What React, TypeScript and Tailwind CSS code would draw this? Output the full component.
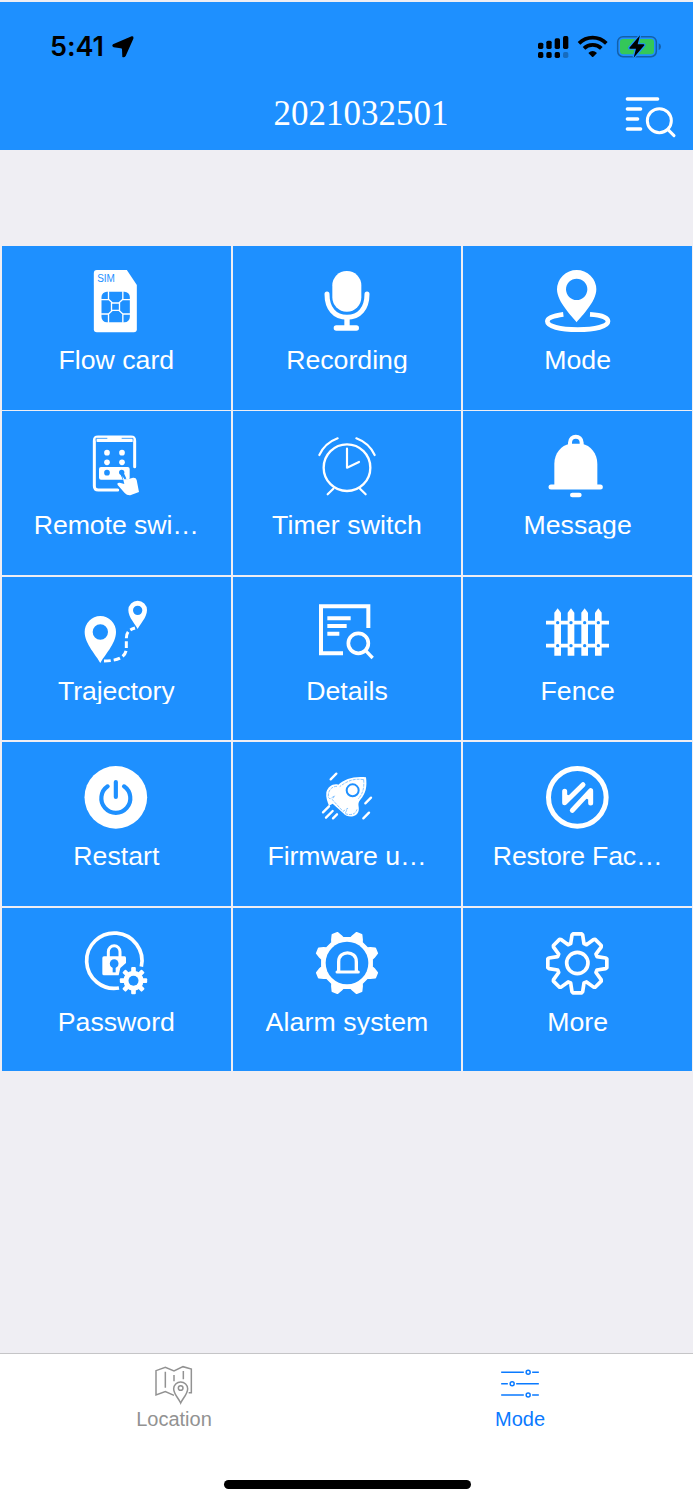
import type { ReactNode } from "react";

const BLUE = "#1e90ff";

// Outline of an eight-toothed gear, one tooth every 45 degrees
const gearPath = (cx: number, cy: number, tooth: number[][]) => {
  const points: string[] = [];
  for (let i = 0; i < 8; i++) {
    const a = (i * Math.PI) / 4;
    tooth.forEach(([x, y]) => {
      const px = cx + x * Math.cos(a) - y * Math.sin(a);
      const py = cy + x * Math.sin(a) + y * Math.cos(a);
      points.push(`${px.toFixed(1)} ${py.toFixed(1)}`);
    });
  }
  return `M${points.join("L")}Z`;
};

const stroke = {
  fill: "none",
  stroke: "white",
  strokeLinecap: "round",
  strokeLinejoin: "round",
} as const;

interface IconProps {
  viewBox: string;
  children: ReactNode;
}

const Icon: React.FC<IconProps> = ({ viewBox, children }) => (
  <svg viewBox={viewBox} className="h-20 w-20 shrink-0" fill="white">
    {children}
  </svg>
);

const SimIcon = () => (
  <Icon viewBox="228.5 63 240 240">
    <path d="M291 90H381L411 135V268Q411 277 402 277H291Q282 277 282 268V99Q282 90 291 90Z" />
    <text x="292" y="127" fontSize="30" fill={BLUE} fontFamily="Liberation Sans, sans-serif">
      SIM
    </text>
    <rect x="305" y="155" width="85" height="92" rx="16" fill={BLUE} />
    <path
      {...stroke}
      strokeWidth="4"
      d="M326 155V178L338 189H357L369 178V155M326 247V222L338 211H357L369 222V247M305 179H326M369 179H390M305 222H326M369 222H390M335 189V211M359 189V211"
    />
  </Icon>
);

const MicIcon = () => (
  <Icon viewBox="921 63 240 240">
    <rect x="997" y="93" width="87" height="122" rx="43" />
    <path {...stroke} strokeWidth="15" d="M981 162C981 206 1004 232 1041 232C1078 232 1101 206 1101 162" />
    <path {...stroke} strokeWidth="16" d="M1041 236V262M1009 264H1069" />
  </Icon>
);

const PinIcon = () => (
  <Icon viewBox="585 63 240 240">
    <path
      fillRule="evenodd"
      d="M701 247C688 230 642 186 642 148A59 58 0 0 1 760 148C760 186 714 230 701 247ZM669 148a32 32 0 1 0 64 0a32 32 0 1 0 -64 0Z"
    />
    <path
      fill="none"
      stroke="white"
      strokeWidth="14"
      d="M661 223C630 227 613 235 613 244C613 259 650 269 704 269C758 269 795 259 795 244C795 234 778 225 741 223"
    />
  </Icon>
);

const RemoteIcon = () => (
  <Icon viewBox="229 64 240 240">
    <path
      {...stroke}
      strokeWidth="9"
      d="M354 256H296Q284 256 284 244V108Q284 97 295 97H394Q405 97 405 108V186"
    />
    <path d="M290 97H400V108Q400 112 396 112H294Q290 112 290 108Z" />
    <path stroke={BLUE} strokeWidth="2.5" fill="none" d="M289 108V101H323M366 101H400V108" />
    <circle cx="322" cy="144" r="8.5" />
    <circle cx="367" cy="144" r="8.5" />
    <circle cx="322" cy="173" r="8.5" />
    <circle cx="367" cy="173" r="8.5" />
    <rect x="298" y="187" width="92" height="38" rx="6" />
    <circle cx="322" cy="204" r="8.5" fill={BLUE} />
    <circle cx="366" cy="203" r="8" fill={BLUE} />
    <path d="M366 204L375 224" stroke={BLUE} strokeWidth="11" />
    <path d="M376 226L400 219Q409 218 411 226L418 262L392 272Q382 273 375 265L354 241Q351 233 360 234L374 238L368 214Z" />
  </Icon>
);

const TimerIcon = () => (
  <Icon viewBox="921 64 240 240">
    <circle {...stroke} cx="1041" cy="189" r="70" strokeWidth="7" />
    <path
      {...stroke}
      strokeWidth="6.5"
      d="M1041 132V189L1077 172M1013 101Q975 115 958 151M1069 101Q1107 115 1124 151M1000 252L983 269M1080 252L1097 269"
    />
  </Icon>
);

const BellIcon = () => (
  <Icon viewBox="585 64 240 240">
    <path d="M634 246V178C634 145 655 122 680 117H717C742 122 763 145 763 178V246Z" />
    <path {...stroke} strokeWidth="12" d="M681 120V114C681 90 716 90 716 114V120" />
    <path {...stroke} strokeWidth="15" d="M624 247H772" />
    <path {...stroke} strokeWidth="14" d="M688 271H709" />
  </Icon>
);

const TrajectoryIcon = () => (
  <Icon viewBox="229 66 240 240">
    <path
      fillRule="evenodd"
      d="M302 279C292 258 255 222 255 186A47 48 0 0 1 349 186C349 222 312 258 302 279ZM279 186a23 23 0 1 0 46 0a23 23 0 1 0 -46 0Z"
    />
    <path
      fillRule="evenodd"
      d="M414 177C408 163 386 143 386 120A28 28 0 0 1 442 120C442 143 420 163 414 177ZM400 121a14 14 0 1 0 28 0a14 14 0 1 0 -28 0Z"
    />
    <path
      fill="none"
      stroke="white"
      strokeWidth="9"
      strokeDasharray="20 9"
      d="M313 273C348 273 380 264 380 235V205C380 186 389 179 406 174"
    />
  </Icon>
);

const DetailsIcon = () => (
  <Icon viewBox="921 66 240 240">
    <path
      fill="none"
      stroke="white"
      strokeWidth="12"
      d="M1029 250H963V109H1105V174M982 145H1052M982 168H1040M982 191H1018"
    />
    <circle cx="1075" cy="220" r="30" fill="none" stroke="white" strokeWidth="11" />
    <path {...stroke} strokeLinecap="butt" strokeWidth="10" d="M1097 242L1118 264" />
  </Icon>
);

const FenceIcon = () => (
  <Icon viewBox="585 66 240 240">
    <path fill="none" stroke="white" strokeWidth="11" d="M609 158H798M609 227H798" />
    {[644, 684, 725, 766].map((x) => (
      <g key={x}>
        <path d={`M${x - 10} 257V128L${x} 115L${x + 10} 128V257Z`} />
        <circle cx={x} cy="158" r="5" fill={BLUE} />
        <circle cx={x} cy="227" r="5" fill={BLUE} />
      </g>
    ))}
  </Icon>
);

const PowerIcon = () => (
  <Icon viewBox="229 66 240 240">
    <circle cx="348.5" cy="187" r="94" />
    <path {...stroke} stroke={BLUE} strokeWidth="12.5" d="M324 154A43.5 43.5 0 1 0 373 154M348.5 141V186" />
  </Icon>
);

const RocketIcon = () => (
  <Icon viewBox="921 67 240 240">
    <path d="M1098 128C1060 124 1034 134 1015 150C998 146 984 156 979 173C977 188 982 201 987 213L998 207L1030 236C1042 250 1070 250 1076 228C1079 214 1070 209 1081 195C1097 178 1102 157 1098 128Z" />
    <path
      fill="none"
      stroke={BLUE}
      strokeWidth="1.5"
      strokeDasharray="9 3"
      d="M1091 135C1060 130 1040 140 1019 156M1091 135C1093 160 1089 178 1074 193M1011 155C994 155 983 169 985 188L990 193L1004 183L997 195L1029 230L1043 221L1035 237C1053 243 1067 239 1071 224"
    />
    <circle cx="1058" cy="167" r="18" fill="white" stroke={BLUE} strokeWidth="6" />
    <path
      {...stroke}
      strokeWidth="7"
      d="M1009 117L992 134M1113 189L1096 206M1107 234L1090 251M987 215L969 233M998 229L978 249M1011 239L999 251"
    />
  </Icon>
);

const RestoreIcon = () => (
  <Icon viewBox="294 66 240 240">
    <circle {...stroke} cx="412" cy="187" r="86.5" strokeWidth="15" />
    <path {...stroke} strokeWidth="15" d="M374 169V203L429 149M397 226L452 167V204" />
    <path d="M374 176L394 184L375 203ZM452 169L451 196L432 188Z" />
  </Icon>
);

const PasswordIcon = () => (
  <Icon viewBox="229 68 240 240">
    <path {...stroke} strokeWidth="11" strokeLinecap="butt" d="M425 199A83 83 0 1 0 358 263" />
    <path {...stroke} strokeWidth="9" d="M326 170V154A17.5 17.5 0 0 1 361 154V170" />
    <path d="M313 168H375Q379 168 379 173V188L362 203L357 225H313Q308 225 308 220V173Q308 168 313 168Z" />
    <circle cx="343.5" cy="190" r="13" fill={BLUE} />
    <path d="M343.5 195V216" stroke={BLUE} strokeWidth="9" />
    <g transform="translate(401.5 241)">
      {[0, 45, 90, 135].map((angle) => (
        <rect key={angle} x="-7" y="-41" width="14" height="82" rx="3" transform={`rotate(${angle})`} />
      ))}
      <circle r="30" />
      <circle r="15" fill={BLUE} />
    </g>
  </Icon>
);

const AlarmIcon = () => (
  <Icon viewBox="921 68 240 240">
    <g transform="rotate(22.5 1041 188)">
      <path
        stroke="white"
        strokeWidth="5"
        strokeLinejoin="round"
        d={gearPath(1041, 188, [[-18, -74], [-15, -82], [-8, -95], [8, -95], [15, -82], [18, -74]])}
      />
    </g>
    <circle cx="1041" cy="188" r="64" fill={BLUE} />
    <path {...stroke} strokeWidth="10" d="M1016 213V184C1016 149 1069 149 1069 184V213" />
    <path {...stroke} strokeWidth="9" d="M1011 215H1075" />
  </Icon>
);

const GearIcon = () => (
  <Icon viewBox="294 563 240 240">
    <path
      {...stroke}
      strokeWidth="11"
      d={gearPath(412, 684, [[-20, -59], [-16, -85], [-13, -88.5], [13, -88.5], [16, -85], [20, -59]])}
    />
    <circle {...stroke} cx="412" cy="683" r="32" strokeWidth="11" />
  </Icon>
);

const items = [
  { label: "Flow card", icon: <SimIcon /> },
  { label: "Recording", icon: <MicIcon />, className: "[clip-path:inset(0_0_3px_0)]" },
  { label: "Mode", icon: <PinIcon /> },
  { label: "Remote swi…", icon: <RemoteIcon />, className: "tracking-[-0.1px]" },
  { label: "Timer switch", icon: <TimerIcon />, className: "tracking-[0.1px]" },
  { label: "Message", icon: <BellIcon />, className: "[clip-path:inset(0_0_3px_0)]" },
  {
    label: "Trajectory",
    icon: <TrajectoryIcon />,
    className: "tracking-[-0.1px] [clip-path:inset(0_0_3px_0)]",
  },
  { label: "Details", icon: <DetailsIcon /> },
  { label: "Fence", icon: <FenceIcon /> },
  { label: "Restart", icon: <PowerIcon /> },
  { label: "Firmware u…", icon: <RocketIcon />, className: "tracking-[-0.1px]" },
  { label: "Restore Fac…", icon: <RestoreIcon />, className: "tracking-[-0.2px]" },
  { label: "Password", icon: <PasswordIcon /> },
  { label: "Alarm system", icon: <AlarmIcon />, className: "tracking-[0.1px] [clip-path:inset(0_0_3px_0)]" },
  { label: "More", icon: <GearIcon /> },
];

const StatusBar = () => (
  <div className="flex h-[86px] items-center justify-between pt-1 pr-[31px] pl-[50px] text-black">
    <div className="flex items-center gap-2">
      <span className="font-[Inter,sans-serif] text-[27px] leading-8 font-semibold tracking-[-0.1px]">5:41</span>
      <svg viewBox="336 107 66 66" className="h-[22px] w-[22px]">
        <path d="M395 108Q402 107 400 115L377 167Q373 173 367 170L366 147Q366 144 362 144L341 141Q334 138 339 132Z" />
      </svg>
    </div>
    <svg viewBox="111 102 375 72" className="h-6 w-[125px]">
      <rect x="114" y="125" width="16" height="19" rx="5" />
      <rect x="139" y="119" width="16" height="25" rx="5" />
      <rect x="164" y="112" width="16" height="32" rx="5" />
      <rect x="189" y="105" width="16" height="39" rx="5" />
      <rect x="114" y="153" width="16" height="18" rx="5" />
      <rect x="139" y="153" width="16" height="18" rx="5" />
      <rect x="164" y="153" width="16" height="18" rx="5" />
      <rect x="189" y="153" width="16" height="18" rx="5" opacity="0.25" />
      <path d="M237 127C260 104 296 104 319 127" fill="none" stroke="black" strokeWidth="11" />
      <path d="M252 142C266 128 290 128 304 142" fill="none" stroke="black" strokeWidth="11" />
      <path d="M265 156Q278 144 291 156L280 167Q278 169 276 167Z" />
      <rect x="353" y="107" width="116" height="60" rx="16" fill="none" stroke="#145fa9" strokeWidth="4.5" />
      <path d="M476 127Q483 130 483 137Q483 144 476 147Z" fill="#145fa9" />
      <rect x="360" y="114" width="102" height="46" rx="9" fill="#34c759" />
      <path
        d="M420 103L388 140Q387 143 391 143H408L401 170L433 133Q434 130 430 130H413Z"
        stroke={BLUE}
        strokeWidth="7"
        paintOrder="stroke"
      />
    </svg>
  </div>
);

const Header = () => (
  <header className="h-[150px] shrink-0 border-t-2 border-[#efeef3] bg-[#1e90ff]">
    <StatusBar />
    <div className="grid h-[52px] grid-cols-[1fr_auto_1fr] items-center pr-4 pl-[45px]">
      <h1 className="col-start-2 font-['Liberation_Serif',serif] text-[35px] leading-[44px] text-white">
        2021032501
      </h1>
      <svg viewBox="374 286 156 132" className="mt-2 h-[44px] w-[52px] justify-self-end">
        <path {...stroke} strokeWidth="10" d="M381 295H472M381 325H421M381 355H412M381 385H421" />
        <circle {...stroke} cx="477" cy="360" r="36" strokeWidth="9" />
        <path {...stroke} strokeWidth="9" d="M503 387L521 405" />
      </svg>
    </div>
  </header>
);

const TabBar = () => (
  <nav className="grid h-[147px] shrink-0 grid-cols-2 grid-rows-[126px_9px] justify-items-center border-t border-[#c5c5c7] bg-white pl-px text-[20px] leading-6">
    <div className="flex flex-col items-center pt-[10px] text-[#929292]">
      <svg viewBox="162 72 120 126" className="h-[42px] w-10" fill="none" stroke="currentColor" strokeWidth="4.5">
        <path d="M222 166L196 155L168 165V92L196 82L222 93L249 80L274 87V158H266M196 95V143M222 105V124M250 93V118" />
        <path d="M242 189C236 175 221 162 221 146A21 20 0 0 1 263 146C263 162 248 175 242 189Z" />
        <circle cx="242" cy="144" r="7" />
      </svg>
      <span className="mt-px">Location</span>
    </div>
    <div className="flex flex-col items-center pt-[10px] text-[#0a7aff]">
      <svg viewBox="1200.5 72 120 126" className="h-[42px] w-10" fill="none" stroke="currentColor" strokeWidth="4.5">
        <path d="M1204 97H1272M1297 97H1317M1204 131H1224M1249 131H1317M1204 165H1272M1297 165H1317" />
        <circle cx="1285" cy="97" r="6" />
        <circle cx="1237" cy="131" r="6" />
        <circle cx="1285" cy="165" r="6" />
      </svg>
      <span className="mt-px">Mode</span>
    </div>
    <div className="col-span-2 h-[9px] w-[247px] rounded-full bg-black" />
  </nav>
);

const App: React.FC = () => {
  return (
    <div className="flex h-[1500px] w-[693px] flex-col bg-[#efeef3] font-['Liberation_Sans',sans-serif]">
      <Header />
      <main className="grow pt-24 pr-px pl-[2px]">
        <div className="grid auto-rows-[163.6px] grid-cols-3 gap-x-[2px] gap-y-[1.85px]">
          {items.map(({ label, icon, className = "" }) => (
            <button key={label} className="flex flex-col items-center bg-[#1e90ff] pt-[15px] text-white">
              {icon}
              <span className={`mt-[3px] text-[26.7px] leading-[32px] whitespace-nowrap ${className}`}>{label}</span>
            </button>
          ))}
        </div>
      </main>
      <TabBar />
    </div>
  );
};

export default App;
